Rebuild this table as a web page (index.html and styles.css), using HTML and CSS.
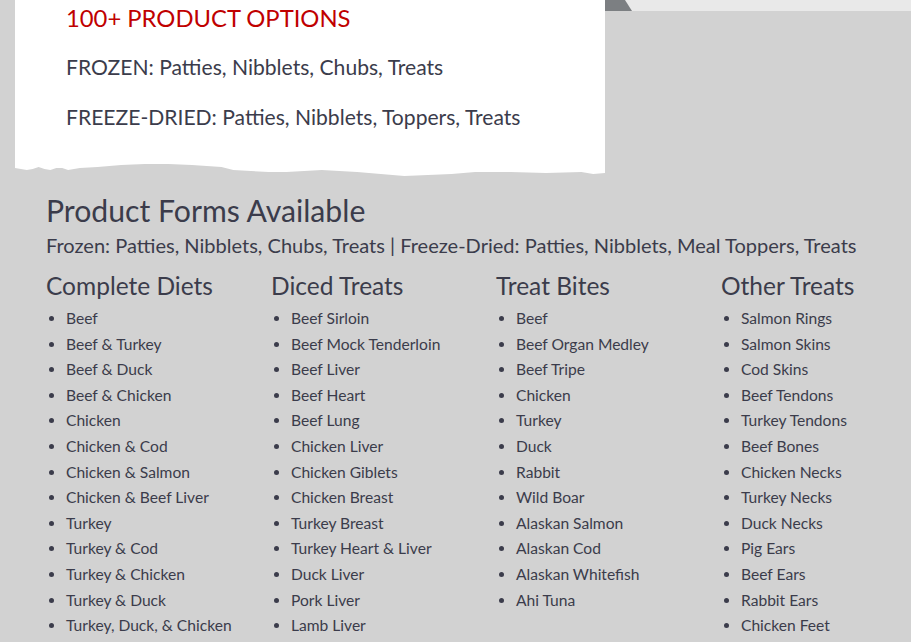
FILE: index.html
```html
<!DOCTYPE html>
<html>
<head>
<meta charset="utf-8">
<link rel="stylesheet" href="styles.css">
</head>
<body>
<div class="top">
  <div class="card">
    <div class="card-title">100+ PRODUCT OPTIONS</div>
    <p class="card-line">FROZEN: Patties, Nibblets, Chubs, Treats</p>
    <p class="card-line">FREEZE-DRIED: Patties, Nibblets, Toppers, Treats</p>
  </div>
  <div class="aside">
    <div class="band"></div>
  </div>
</div>
<section class="forms">
  <h2 class="forms-title">Product Forms Available</h2>
  <p class="forms-sub">Frozen: Patties, Nibblets, Chubs, Treats | Freeze-Dried: Patties, Nibblets, Meal Toppers, Treats</p>
  <div class="cols">
    <div class="col">
      <h3 class="col-title">Complete Diets</h3>
      <ul class="list">
        <li>Beef</li>
        <li>Beef &amp; Turkey</li>
        <li>Beef &amp; Duck</li>
        <li>Beef &amp; Chicken</li>
        <li>Chicken</li>
        <li>Chicken &amp; Cod</li>
        <li>Chicken &amp; Salmon</li>
        <li>Chicken &amp; Beef Liver</li>
        <li>Turkey</li>
        <li>Turkey &amp; Cod</li>
        <li>Turkey &amp; Chicken</li>
        <li>Turkey &amp; Duck</li>
        <li>Turkey, Duck, &amp; Chicken</li>
      </ul>
    </div>
    <div class="col">
      <h3 class="col-title">Diced Treats</h3>
      <ul class="list">
        <li>Beef Sirloin</li>
        <li>Beef Mock Tenderloin</li>
        <li>Beef Liver</li>
        <li>Beef Heart</li>
        <li>Beef Lung</li>
        <li>Chicken Liver</li>
        <li>Chicken Giblets</li>
        <li>Chicken Breast</li>
        <li>Turkey Breast</li>
        <li>Turkey Heart &amp; Liver</li>
        <li>Duck Liver</li>
        <li>Pork Liver</li>
        <li>Lamb Liver</li>
      </ul>
    </div>
    <div class="col">
      <h3 class="col-title">Treat Bites</h3>
      <ul class="list">
        <li>Beef</li>
        <li>Beef Organ Medley</li>
        <li>Beef Tripe</li>
        <li>Chicken</li>
        <li>Turkey</li>
        <li>Duck</li>
        <li>Rabbit</li>
        <li>Wild Boar</li>
        <li>Alaskan Salmon</li>
        <li>Alaskan Cod</li>
        <li>Alaskan Whitefish</li>
        <li>Ahi Tuna</li>
      </ul>
    </div>
    <div class="col">
      <h3 class="col-title">Other Treats</h3>
      <ul class="list">
        <li>Salmon Rings</li>
        <li>Salmon Skins</li>
        <li>Cod Skins</li>
        <li>Beef Tendons</li>
        <li>Turkey Tendons</li>
        <li>Beef Bones</li>
        <li>Chicken Necks</li>
        <li>Turkey Necks</li>
        <li>Duck Necks</li>
        <li>Pig Ears</li>
        <li>Beef Ears</li>
        <li>Rabbit Ears</li>
        <li>Chicken Feet</li>
      </ul>
    </div>
  </div>
</section>
</body>
</html>
```

FILE: styles.css
```css
html, body {
  margin: 0;
  padding: 0;
  background: #d2d2d2;
  font-family: Lato, "Open Sans", sans-serif;
  color: #3b3c4b;
  overflow: hidden;
}
.top {
  display: flex;
  align-items: flex-start;
}
.card {
  margin-left: 15px;
  width: 590px;
  height: 177px;
  box-sizing: border-box;
  background: #ffffff;
  padding: 4px 0 0 51px;
  clip-path: polygon(0 0, 100% 0, 100% 173px, 98% 174px, 96% 172px, 90% 173px, 84% 172px, 78% 172px, 74% 174px, 70% 175px, 66% 176px, 62% 174px, 58% 172px, 55% 171px, 52% 170px, 49% 171px, 46% 172px, 43% 172px, 40% 171px, 37% 170px, 35% 167px, 30% 165px, 26% 164px, 22% 164px, 18% 165px, 14% 167px, 11% 168px, 9% 170px, 8% 168px, 7% 168px, 6% 170px, 5% 169px, 4% 167px, 3% 169px, 2% 170px, 1% 169px, 0 168px);
}
.card-title {
  color: #c00000;
  font-size: 23.8px;
  line-height: 28px;
  margin: 0 0 22px;
}
.card-line {
  font-size: 21.1px;
  line-height: 26px;
  margin: 0 0 24px;
}
.aside {
  flex: 1;
}
.band {
  position: relative;
  height: 11px;
  background: #e9e9e9;
}
.band::before {
  content: "";
  position: absolute;
  left: 0;
  top: 0;
  width: 27px;
  height: 11px;
  background: #7c7f82;
  clip-path: polygon(0 0, 20px 0, 27px 11px, 0 11px);
}
.forms {
  padding: 15px 0 0 46px;
}
.forms-title {
  font-weight: 400;
  font-size: 30.2px;
  line-height: 36px;
  margin: 0 0 4px;
}
.forms-sub {
  font-size: 20.05px;
  line-height: 26px;
  margin: 0 0 13px;
}
.cols {
  display: grid;
  grid-template-columns: repeat(4, 225px);
}
.col-title {
  font-weight: 400;
  font-size: 24.5px;
  line-height: 30px;
  margin: 0 0 5px;
}
.list {
  margin: 0;
  padding-left: 20px;
  font-size: 15.6px;
  line-height: 25.6px;
}
```
